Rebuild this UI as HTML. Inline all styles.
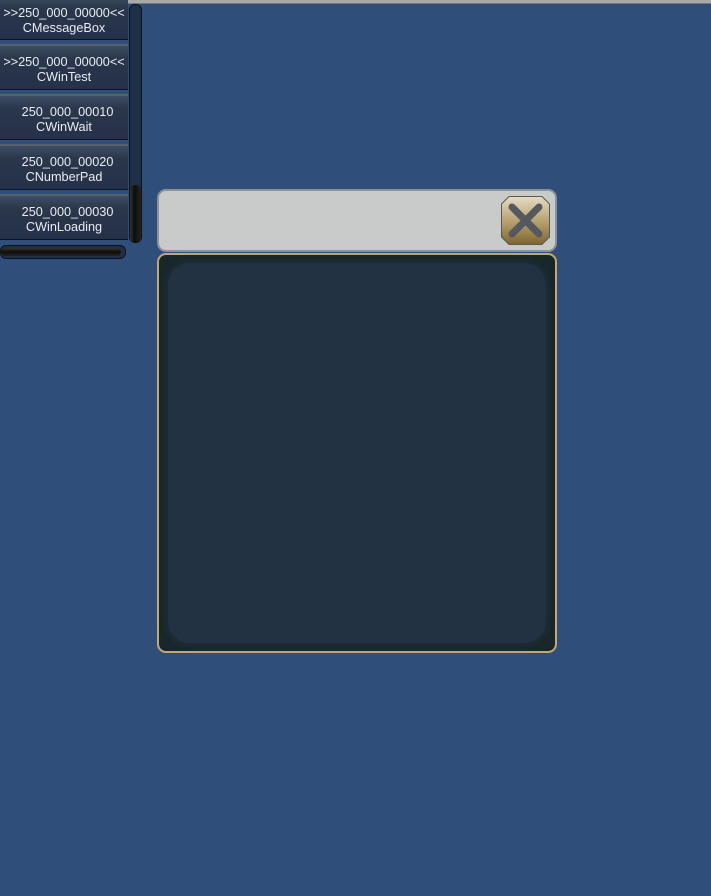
<!DOCTYPE html>
<html><head><style>
body{margin:0;width:711px;height:896px;background:#2f4f7a;position:relative;overflow:hidden;font-family:"Liberation Sans",sans-serif}
.top{position:absolute;left:0;top:0;width:711px;height:3px;background:#a8a8a8;border-bottom:1px solid #7a7a7a}
.btn{position:absolute;left:0;width:128px;height:46px;background:linear-gradient(#3e4d63,#2a364a 30%,#25314a);border-top:2px solid #56606e;border-bottom:1px solid #10151d;color:#e8ecf0;font-size:12.7px;text-align:center;line-height:15px;box-sizing:border-box;padding-top:9px}
.sb{position:absolute;left:129px;top:4px;width:13px;height:239px;background:#1f2f47;border:1px solid #0c121a;border-radius:6px;box-sizing:border-box}
.th{position:absolute;left:130px;top:185px;width:11px;height:58px;background:linear-gradient(90deg,#333,#0d0d0d 40%,#222);border-radius:5px}
.hs{position:absolute;left:0;top:245px;width:126px;height:14px;background:#1f2f47;border:1px solid #0c121a;border-radius:6px;box-sizing:border-box}
.hs div{position:absolute;left:0;top:2px;width:120px;height:8px;background:linear-gradient(#333,#0d0d0d 50%,#222);border-radius:4px}
.hd{position:absolute;left:157px;top:189px;width:400px;height:63px;background:#c9cbcb;border:2px solid #8b929c;border-radius:9px;box-sizing:border-box}
.cl{position:absolute;left:501px;top:196px;width:49px;height:49px}
.bd{position:absolute;left:157px;top:253px;width:400px;height:400px;background:#182729;border:2px solid #c4a874;border-radius:9px;box-sizing:border-box}
.in{position:absolute;left:9px;top:8px;right:9px;bottom:8px;background:#223242;border-radius:22px;box-shadow:0 0 6px 3px #1d2d38}
</style></head><body>
<div class="top"></div>
<div class="btn" style="top:-6px;padding-top:10px">&gt;&gt;250_000_00000&lt;&lt;<br>CMessageBox</div>
<div class="btn" style="top:44px">&gt;&gt;250_000_00000&lt;&lt;<br>CWinTest</div>
<div class="btn" style="top:94px">&nbsp;&nbsp;250_000_00010<br>CWinWait</div>
<div class="btn" style="top:144px">&nbsp;&nbsp;250_000_00020<br>CNumberPad</div>
<div class="btn" style="top:194px">&nbsp;&nbsp;250_000_00030<br>CWinLoading</div>
<div class="sb"></div><div class="th"></div>
<div class="hs"><div></div></div>
<div class="hd"></div>
<svg class="cl" viewBox="0 0 49 49"><defs><linearGradient id="g" x1="0" y1="0" x2="0" y2="1"><stop offset="0" stop-color="#e6dcc4"/><stop offset=".55" stop-color="#b49d6c"/><stop offset="1" stop-color="#7d6530"/></linearGradient></defs>
<polygon points="8,0.5 41,0.5 48.5,8 48.5,41 41,48.5 8,48.5 0.5,41 0.5,8" fill="url(#g)" stroke="#5a5a52"/>
<path d="M11 11L38 38M38 11L11 38" stroke="#55585c" stroke-width="7" stroke-linecap="round"/></svg>
<div class="bd"><div class="in"></div></div>
</body></html>
